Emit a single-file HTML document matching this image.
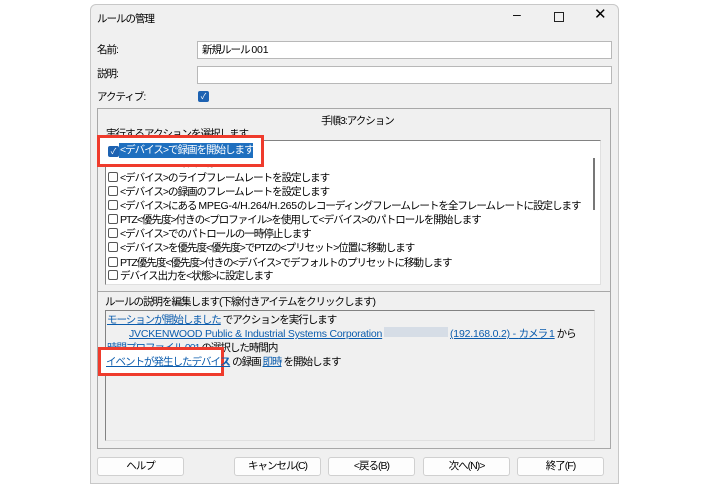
<!DOCTYPE html>
<html><head><meta charset="utf-8"><style>
*{box-sizing:border-box;margin:0;padding:0}
body{width:708px;height:487px;background:#fff;font-family:"Liberation Sans","Noto Sans CJK JP",sans-serif;font-size:10.5px;letter-spacing:-1px;color:#000;position:relative;overflow:hidden}
.a{position:absolute;white-space:nowrap}
.win{position:absolute;left:90px;top:4px;width:529px;height:480px;background:#f0f0f0;border:1px solid #c8c8c8;border-radius:6px 6px 0 0}
.inp{position:absolute;background:#fff;border:1px solid #b8b8b8}
.grp{position:absolute;border:1px solid #a8a8a8}
.lb{position:absolute;background:#fff;border:1px solid #828282;border-right-color:#e0e0e0;border-bottom-color:#e0e0e0}
.cb{display:inline-block;width:10px;height:10px;border:1px solid #555;border-radius:2px;vertical-align:-1px;margin-right:2px;background:#fff}
.row{position:absolute;left:108px;height:14px;line-height:14px;white-space:nowrap}
a{color:#0b5cad;text-decoration:underline}
.l{letter-spacing:-0.2px}
.btn{position:absolute;top:457px;height:19px;width:87px;background:#fdfdfd;border:1px solid #d0d0d0;border-radius:3px;text-align:center;line-height:17px}
.red{position:absolute;border:3px solid #ef3b2c;background:#fff}
.chk{position:absolute;width:11px;height:11px;background:#1d62b2;border-radius:2px;color:#fff;font-size:8px;line-height:11px;text-align:center;letter-spacing:0}
</style></head><body>
<div class="win"></div>
<div class="a" style="left:97px;top:11px">ルールの管理</div>
<div class="a" style="left:513px;top:6px;font-size:14px">–</div>
<div class="a" style="left:554px;top:12px;width:10px;height:10px;border:1px solid #222"></div>
<div class="a" style="left:594px;top:5px;font-size:15px">✕</div>
<div class="a" style="left:97px;top:42px">名前:</div>
<div class="inp" style="left:197px;top:41px;width:415px;height:18px;padding-left:4px;line-height:16px">新規ルール <span class="l">001</span></div>
<div class="a" style="left:97px;top:66px">説明:</div>
<div class="inp" style="left:197px;top:66px;width:415px;height:18px"></div>
<div class="a" style="left:97px;top:89px">アクティブ:</div>
<div class="chk" style="left:198px;top:91px">✓</div>
<div class="grp" style="left:97px;top:108px;width:514px;height:184px"></div>
<div class="a" style="left:321px;top:113px">手順3:アクション</div>
<div class="a" style="left:106px;top:126px">実行するアクションを選択します</div>
<div class="lb" style="left:105px;top:140px;width:496px;height:145px"></div>
<div class="a" style="left:593px;top:158px;width:2px;height:52px;background:#777"></div>
<div class="row" style="top:156px"><span class="cb"></span>&lt;デバイス&gt;で録画を停止します</div>
<div class="row" style="top:171px"><span class="cb"></span>&lt;デバイス&gt;のライブフレームレートを設定します</div>
<div class="row" style="top:185px"><span class="cb"></span>&lt;デバイス&gt;の録画のフレームレートを設定します</div>
<div class="row" style="top:199px"><span class="cb"></span>&lt;デバイス&gt;にある <span class="l">MPEG-4/H.264/H.265</span>のレコーディングフレームレートを全フレームレートに設定します</div>
<div class="row" style="top:213px"><span class="cb"></span>PTZ&lt;優先度&gt;付きの&lt;プロファイル&gt;を使用して&lt;デバイス&gt;のパトロールを開始します</div>
<div class="row" style="top:227px"><span class="cb"></span>&lt;デバイス&gt;でのパトロールの一時停止します</div>
<div class="row" style="top:241px"><span class="cb"></span>&lt;デバイス&gt;を優先度&lt;優先度&gt;でPTZの&lt;プリセット&gt;位置に移動します</div>
<div class="row" style="top:256px"><span class="cb"></span>PTZ優先度&lt;優先度&gt;付きの&lt;デバイス&gt;でデフォルトのプリセットに移動します</div>
<div class="row" style="top:269px"><span class="cb"></span>デバイス出力を&lt;状態&gt;に設定します</div>
<div class="red" style="left:97px;top:135px;width:167px;height:32px"></div>
<div class="chk" style="left:108px;top:146px">✓</div>
<div class="a" style="left:119px;top:143px;width:134px;height:15px;background:#1e6fbf;color:#fff;line-height:15px;padding-left:1px;overflow:hidden">&lt;デバイス&gt;で録画を開始します</div>
<div class="grp" style="left:97px;top:291px;width:514px;height:158px"></div>
<div class="a" style="left:105px;top:294px">ルールの説明を編集します(下線付きアイテムをクリックします)</div>
<div class="lb" style="left:105px;top:310px;width:490px;height:131px;background:#f0f0f0"></div>
<div class="a" style="left:107px;top:312px"><a>モーションが開始しました</a> でアクションを実行します</div>
<div class="a" style="left:129px;top:326px"><a class="l">JVCKENWOOD Public &amp; Industrial Systems Corporation</a> <span style="display:inline-block;width:64px;height:10px;background:#d6dde6"></span> <a><span class="l">(192.168.0.2) - </span>カメラ <span class="l">1</span></a> から</div>
<div class="a" style="left:107px;top:340px"><a>時間プロファイル 001</a> の選択した時間内</div>
<div class="a" style="left:107px;top:354px"><a>イベントが発生したデバイス</a> の録画 <a>即時</a> を開始します</div>
<div class="red" style="left:98px;top:347px;width:126px;height:29px"></div>
<div class="a" style="left:106px;top:354px"><a>イベントが発生したデバイス</a></div>
<div class="btn" style="left:97px">ヘルプ</div>
<div class="btn" style="left:234px">キャンセル(C)</div>
<div class="btn" style="left:328px">&lt;戻る(B)</div>
<div class="btn" style="left:423px">次へ(N)&gt;</div>
<div class="btn" style="left:517px">終了(F)</div>
</body></html>
